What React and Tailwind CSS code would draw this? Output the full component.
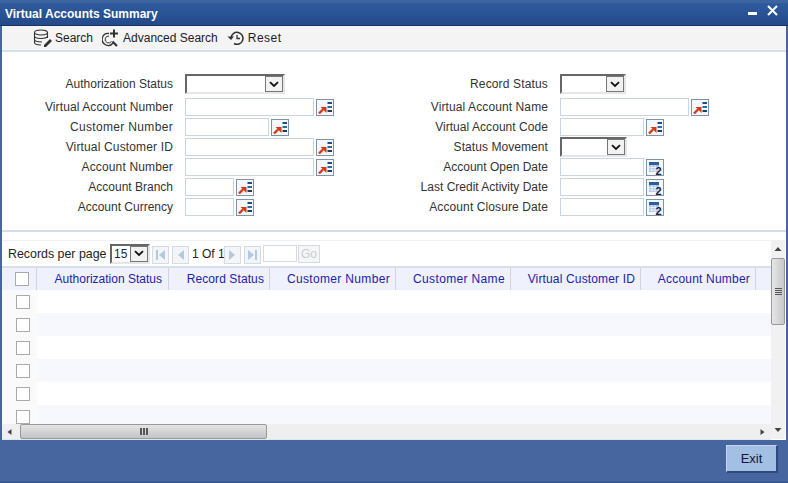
function LovIcon() {
  return (
    <span className="w-[18px] h-[17px] border border-[#7c93a8] bg-[#f4f7fb] flex items-center justify-center shrink-0">
      <svg width="16" height="15" viewBox="0 0 16 15">
        <path d="M2 13.500L6 9.500" stroke="#d23a14" strokeWidth="2.400" fill="none" />
        <path d="M3.500 7H9.500V13Z" fill="#d23a14" />
        <rect x="10.500" y="2" width="4.500" height="2" fill="#1d4f86" />
        <rect x="10.500" y="6" width="4.500" height="2" fill="#2a6aa5" />
        <rect x="10.500" y="10" width="4.500" height="2" fill="#163f6e" />
      </svg>
    </span>
  );
}

function CalIcon() {
  return (
    <span className="w-[18px] h-[17px] border border-[#7c93a8] bg-[#f4f7fb] flex items-center justify-center shrink-0">
      <svg width="16" height="15" viewBox="0 0 16 15">
        <rect x="2" y="2" width="10" height="3" fill="#2a5f9e" />
        <rect x="2" y="5" width="10" height="7" fill="#a9c4e4" />
        <path d="M2 7.500H12M2 10H12M5 5V12M8 5V12" stroke="#f4f7fb" strokeWidth="0.800" />
        <text x="8.500" y="14.500" fontSize="11" fontWeight="700" fontFamily="Liberation Sans" fill="#10243f">2</text>
      </svg>
    </span>
  );
}

function Chevron() {
  return (
    <svg width="10" height="7" viewBox="0 0 10 7">
      <path d="M1 1.200 L5 5 L9 1.200" fill="none" stroke="#111" strokeWidth="1.800" />
    </svg>
  );
}

function SelectBox({ width, label, arrow = 18 }) {
  return (
    <span
      className="h-[20px] flex items-stretch border-t-2 border-l-2 border-t-[#666] border-l-[#666] border-r-2 border-b-2 border-r-[#e6e6e6] border-b-[#e6e6e6] bg-white shrink-0"
      style={{ width }}
    >
      <span className="flex-1 text-[12px] leading-[16px] text-[#223] pl-[2px]">{label}</span>
      <span className="border border-[#777] bg-[#f2f2f2] flex items-center justify-center" style={{ width: arrow }}>
        <Chevron />
      </span>
    </span>
  );
}

function TextBox({ width }) {
  return <span className="h-[18px] border border-[#c9d6e2] bg-white shrink-0" style={{ width }} />;
}

function FormRow({ label, track, children }) {
  return (
    <div className="h-[20px] flex items-center">
      <span className="w-[171px] text-right text-[12px] text-[#333] whitespace-nowrap shrink-0">
        <span className={track}>{label}</span>
      </span>
      <div className="flex items-center gap-[2px] ml-[12px]">{children}</div>
    </div>
  );
}

function PageBtn({ d }) {
  return (
    <span className="w-[17px] h-[18px] border border-[#d4dbe3] bg-[#f3f5f8] flex items-center justify-center shrink-0">
      <svg width="13" height="14" viewBox="0 0 13 14">
        <path d={d} fill="#b4c8de" />
      </svg>
    </span>
  );
}

const left = [
  ["Authorization Status", "", <SelectBox key="a" width={100} />],
  ["Virtual Account Number", "tracking-[0.1px]", <><TextBox width={129} /><LovIcon /></>],
  ["Customer Number", "tracking-[0.33px]", <><TextBox width={84} /><LovIcon /></>],
  ["Virtual Customer ID", "tracking-[0.15px]", <><TextBox width={129} /><LovIcon /></>],
  ["Account Number", "tracking-[0.15px]", <><TextBox width={129} /><LovIcon /></>],
  ["Account Branch", "", <><TextBox width={49} /><LovIcon /></>],
  ["Account Currency", "", <><TextBox width={49} /><LovIcon /></>],
];

const right = [
  ["Record Status", "tracking-[0.15px]", <SelectBox key="a" width={66} />],
  ["Virtual Account Name", "tracking-[0.1px]", <><TextBox width={129} /><LovIcon /></>],
  ["Virtual Account Code", "tracking-[0.05px]", <><TextBox width={84} /><LovIcon /></>],
  ["Status Movement", "tracking-[0.07px]", <SelectBox key="b" width={67} />],
  ["Account Open Date", "", <><TextBox width={84} /><CalIcon /></>],
  ["Last Credit Activity Date", "", <><TextBox width={84} /><CalIcon /></>],
  ["Account Closure Date", "tracking-[0.1px]", <><TextBox width={84} /><CalIcon /></>],
];

const cols = [
  ["Authorization Status", 132, "pr-[6px]", ""],
  ["Record Status", 101, "pr-[5px]", "tracking-[0.1px]"],
  ["Customer Number", 126, "pr-[5px]", "tracking-[0.33px]"],
  ["Customer Name", 115, "pr-[5px]", "tracking-[0.35px]"],
  ["Virtual Customer ID", 130, "pr-[5px]", "tracking-[0.15px]"],
  ["Account Number", 115, "pr-[5px]", "tracking-[0.2px]"],
];

function Check() {
  return <span className="w-[14px] h-[14px] border border-[#aaa] bg-white block" />;
}

function Arrow({ d }) {
  return (
    <svg width="8" height="8" viewBox="0 0 8 8">
      <path d={d} fill="#444" />
    </svg>
  );
}

export default function App() {
  return (
    <div className="w-[788px] h-[483px] flex flex-col bg-[#47669f] overflow-hidden font-['Liberation_Sans',Arial,sans-serif]">
      {/* Title */}
      <div className="h-[26px] shrink-0 flex items-center justify-between pl-[5px] pr-[10px] border-t-[3px] border-t-[#3c659f] border-b border-b-[#17335f] bg-gradient-to-b from-[#2f5c9f] to-[#234a8a]">
        <span className="text-white text-[12px] font-bold">Virtual Accounts Summary</span>
        <div className="flex items-start gap-[10px] h-full">
          <span className="w-[9px] h-[3px] bg-white mt-[9px]" />
          <svg width="11" height="11" viewBox="0 0 11 11" className="mt-[2px]">
            <path d="M1 1L10 10M10 1L1 10" stroke="#fff" strokeWidth="2" />
          </svg>
        </div>
      </div>

      {/* Body */}
      <div className="h-[414px] shrink-0 mx-[2px] flex flex-col bg-white">
        {/* Toolbar */}
        <div className="h-[26px] shrink-0 flex items-center pl-[31px] bg-[#f4f4f4] border-b-2 border-b-[#d5e0e8] text-[12px] text-[#222]">
          <svg width="20" height="19" viewBox="0 0 20 19" fill="none" stroke="#333" strokeWidth="1.100">
            <ellipse cx="8" cy="3.500" rx="6.500" ry="2.500" />
            <path d="M1.500 3.500V13.500C1.500 15 4.500 16 8 16M14.500 3.500V9M1.500 7C1.500 8.500 4.500 9.500 8 9.500S14.500 8.500 14.500 7M1.500 10.500C1.500 12 4.500 13 9 13" />
            <path d="M11 16L17 10L19 12L13 18H11Z" fill="#333" stroke="none" />
          </svg>
          <span className="ml-[2px]">Search</span>
          <svg width="18" height="19" viewBox="0 0 18 19" fill="none" stroke="#333" className="ml-[9px]">
            <path d="M7 4.500A6 6 0 1 0 11 14" strokeWidth="1.300" />
            <path d="M7 7A3.500 3.500 0 1 0 9.500 12.500" strokeWidth="1" />
            <path d="M10.500 12.500L15 17" strokeWidth="2.200" />
            <path d="M12 0.500V8.500M8 4.500H16" strokeWidth="2" />
          </svg>
          <span className="ml-[3px]">Advanced Search</span>
          <svg width="18" height="16" viewBox="0 0 18 16" fill="none" stroke="#333" className="ml-[9px]">
            <path d="M4 8A6 6 0 1 1 7 13.500" strokeWidth="1.500" />
            <path d="M0.500 6.500H7L4 10Z" fill="#333" stroke="none" />
            <path d="M10 5V8.500H13" strokeWidth="1.300" />
          </svg>
          <span className="ml-[3px] tracking-[0.5px]">Reset</span>
        </div>

        {/* Form */}
        <div className="h-[180px] shrink-0 flex pt-[22px] border-b-2 border-b-[#d5dde6]">
          <div className="w-[375px] flex flex-col">
            {left.map(([l, t, c], i) => (
              <div key={l} className={i === 0 ? "mb-[3px]" : ""}>
                <FormRow label={l} track={t}>{c}</FormRow>
              </div>
            ))}
          </div>
          <div className="flex flex-col">
            {right.map(([l, t, c], i) => (
              <div key={l} className={i === 0 ? "mb-[3px]" : ""}>
                <FormRow label={l} track={t}>{c}</FormRow>
              </div>
            ))}
          </div>
        </div>

        {/* Grid */}
        <div className="flex-1 min-h-0 flex pt-[8px]">
          <div className="flex-1 min-w-0 flex flex-col border-t border-t-[#eef0f3]">
            {/* Pager */}
            <div className="h-[25px] shrink-0 flex items-center pl-[6px] text-[12px] text-[#222]">
              <span className="text-[12.4px] whitespace-nowrap w-[99px] mt-[1px]">Records per page</span>
              <span className="ml-[3px]">
                <SelectBox width={40} label="15" arrow={18} />
              </span>
              <span className="flex gap-[3px] ml-[2px] mt-[2px]">
                <PageBtn d="M2 2H4V12H2ZM11 2V12L5 7Z" />
                <PageBtn d="M10 2V12L4 7Z" />
              </span>
              <span className="ml-[3px] text-[12px] w-[32px] whitespace-nowrap">1 Of 1</span>
              <span className="flex gap-[3px] mt-[2px]">
                <PageBtn d="M3 2V12L9 7Z" />
                <PageBtn d="M2 2V12L8 7ZM9 2H11V12H9Z" />
              </span>
              <span className="w-[34px] h-[17px] border border-[#d4dbe3] bg-white ml-[2px]" />
              <span className="w-[22px] h-[18px] ml-[1px] mt-[1px] border border-[#d4dbe3] bg-[#f5f6f8] text-[#ccc] flex items-center justify-center">Go</span>
            </div>

            {/* Header */}
            <div className="h-[24px] shrink-0 flex border-t-2 border-t-[#d8dfe8] bg-[#eff1fd] overflow-hidden">
              <div className="w-[35px] shrink-0 flex items-center justify-center border-r border-r-[#d0d4dc] pl-[6px]">
                <Check />
              </div>
              {cols.map(([c, w, pr, track]) => (
                <div key={c} className={`h-full shrink-0 flex items-center justify-end border-r border-r-[#d0d4dc] text-[12px] text-[#2323a6] whitespace-nowrap ${pr} ${track}`} style={{ width: w }}>
                  {c}
                </div>
              ))}
            </div>

            {/* Rows */}
            <div className="flex-1 min-h-0 overflow-hidden flex flex-col">
              {[0, 1, 2, 3, 4, 5].map((i) => (
                <div key={i} className={`h-[23px] shrink-0 flex ${i % 2 ? "bg-[#f7f8fd]" : "bg-white"}`}>
                  <div className="w-[35px] shrink-0 bg-[#fafafb] flex items-center justify-center pl-[6px]">
                    <Check />
                  </div>
                </div>
              ))}
            </div>

            {/* Horizontal scrollbar */}
            <div className="h-[16px] shrink-0 flex items-center bg-[#efefef] border-b border-b-[#dfe6ee]">
              <span className="w-[16px] flex justify-center"><Arrow d="M5.500 1V7L1.500 4Z" /></span>
              <div className="w-[247px] h-[15px] ml-[2px] border border-[#999] rounded-[2px] bg-gradient-to-b from-[#e4e4e4] to-[#c4c4c8] flex items-center justify-center gap-[1px]">
                <span className="w-[2px] h-[7px] bg-[#555]" />
                <span className="w-[2px] h-[7px] bg-[#555]" />
                <span className="w-[2px] h-[7px] bg-[#555]" />
              </div>
              <span className="ml-auto w-[16px] mr-[1px] flex justify-center"><Arrow d="M2.500 1V7L6.500 4Z" /></span>
            </div>
          </div>

          {/* Vertical scrollbar */}
          <div className="w-[14px] shrink-0 flex flex-col items-center bg-[#f1f1f1] mr-[1px] mb-[1px]">
            <span className="h-[18px] flex items-center justify-center"><Arrow d="M0.500 6H7.500L4 2Z" /></span>
            <div className="w-[14px] h-[67px] border border-[#999] rounded-[2px] bg-gradient-to-r from-[#e6e6e6] to-[#c8c8cc] flex flex-col items-center justify-center gap-[1px]">
              <span className="w-[7px] h-[1px] bg-[#555]" />
              <span className="w-[7px] h-[1px] bg-[#555]" />
              <span className="w-[7px] h-[1px] bg-[#555]" />
              <span className="w-[7px] h-[1px] bg-[#555]" />
            </div>
            <span className="mt-auto h-[18px] flex items-center justify-center"><Arrow d="M0.500 2H7.500L4 6Z" /></span>
          </div>
        </div>
      </div>

      {/* Footer */}
      <div className="flex-1 flex items-start justify-end pr-[10px] pt-[5px] border-b-[2px] border-b-[#3a5a94]">
        <span className="w-[52px] h-[28px] bg-[#a3bfe3] border-t border-l border-t-[#c4d6ee] border-l-[#c4d6ee] border-r-2 border-b-2 border-r-[#2f4a7c] border-b-[#2f4a7c] text-[#0d1a30] text-[13px] flex items-center justify-center">
          Exit
        </span>
      </div>
    </div>
  );
}
